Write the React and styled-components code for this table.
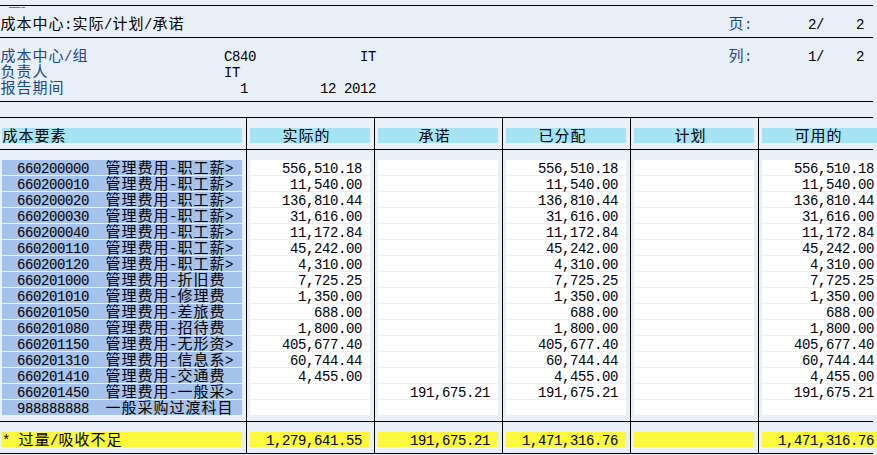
import React from 'react';
import styled, { createGlobalStyle } from 'styled-components';

const GlobalStyle = createGlobalStyle`
  html, body { margin: 0; padding: 0; }
  body {
    background: #e9eff7;
    overflow: hidden;
    font-family: "Liberation Mono", "Noto Sans CJK SC", monospace;
    font-size: 14px;
    letter-spacing: -0.4px;
    color: #000;
  }
`;

const Page = styled.div`
  width: 877px;
  height: 455px;
  padding-top: 5px;
  box-sizing: border-box;
  overflow: hidden;
  background: #e9eff7;
`;

const TitleBand = styled.div`
  width: 873px;
  height: 31px;
  border-top: 1px solid #000;
  border-bottom: 1px solid #000;
`;

const Marker = styled.div`
  width: 16px;
  height: 1px;
  margin: 1px 0 9px 9px;
  background: linear-gradient(90deg, #f0502c 0 11px, #f7a48e 11px 13px, #f0502c 13px);
`;

const HeadRow = styled.div`
  display: grid;
  grid-template-columns: 728px 80px 48px auto;
  height: 16px;
  line-height: 16px;
  white-space: pre;
`;

const InfoBand = styled.div`
  width: 873px;
  height: 52px;
  padding-top: 11px;
  border-bottom: 1px solid #000;
`;

const InfoRow = styled.div`
  display: grid;
  grid-template-columns: 224px 136px 368px 80px 48px auto;
  height: 16px;
  line-height: 16px;
  white-space: pre;
`;

const Label = styled.span`
  color: #17478c;
`;

const Band = styled.div`
  width: 873px;
  display: grid;
  grid-template-columns: 246px repeat(5, 128px);
  border-bottom: 1px solid #000;
  ${p => p.$open && 'border-top: 1px solid #000; margin-top: 15px;'}
`;

const Col = styled.div`
  display: flex;
  flex-direction: column;
  gap: 1px;
  padding: 10px 4px 6px ${p => (p.$first ? 2 : 3)}px;
  border-left: ${p => (p.$first ? 'none' : '1px solid #000')};
`;

const tones = {
  blue: '#a4c2ea',
  white: '#ffffff',
  cyan: '#a6e4f3',
  yellow: '#fcf83e',
};

const Cell = styled.div`
  height: 15px;
  box-sizing: border-box;
  padding: 2px ${p => (p.$align && p.$align !== 'left' ? 8 : 0)}px 0 ${p => p.$indent || 0}px;
  line-height: 15px;
  white-space: pre;
  background: ${p => tones[p.$tone]};
  text-align: ${p => p.$align || 'left'};
`;

const Han = styled.span`
  display: inline-block;
  width: 16px;
  text-align: center;
  font-family: "Noto Sans CJK SC", sans-serif;
  font-size: 15px;
  line-height: 1px;
  letter-spacing: 0;
`;

const wide = /[\u2E80-\u9FFF\uFF00-\uFFEF]/;

// SAP list output: half-width chars 8px, CJK chars 16px
function Txt({ s }) {
  const parts = [];
  let run = '';
  [...s].forEach((c, i) => {
    if (wide.test(c)) {
      if (run) parts.push(run);
      run = '';
      parts.push(<Han key={i}>{c}</Han>);
    } else {
      run += c;
    }
  });
  if (run) parts.push(run);
  return <>{parts}</>;
}

const heads = ['实际的', '承诺', '已分配', '计划', '可用的'];

const rows = [
  ['660200000', '管理费用-职工薪>', '556,510.18', '', '556,510.18', '', '556,510.18'],
  ['660200010', '管理费用-职工薪>', '11,540.00', '', '11,540.00', '', '11,540.00'],
  ['660200020', '管理费用-职工薪>', '136,810.44', '', '136,810.44', '', '136,810.44'],
  ['660200030', '管理费用-职工薪>', '31,616.00', '', '31,616.00', '', '31,616.00'],
  ['660200040', '管理费用-职工薪>', '11,172.84', '', '11,172.84', '', '11,172.84'],
  ['660200110', '管理费用-职工薪>', '45,242.00', '', '45,242.00', '', '45,242.00'],
  ['660200120', '管理费用-职工薪>', '4,310.00', '', '4,310.00', '', '4,310.00'],
  ['660201000', '管理费用-折旧费', '7,725.25', '', '7,725.25', '', '7,725.25'],
  ['660201010', '管理费用-修理费', '1,350.00', '', '1,350.00', '', '1,350.00'],
  ['660201050', '管理费用-差旅费', '688.00', '', '688.00', '', '688.00'],
  ['660201080', '管理费用-招待费', '1,800.00', '', '1,800.00', '', '1,800.00'],
  ['660201150', '管理费用-无形资>', '405,677.40', '', '405,677.40', '', '405,677.40'],
  ['660201310', '管理费用-信息系>', '60,744.44', '', '60,744.44', '', '60,744.44'],
  ['660201410', '管理费用-交通费', '4,455.00', '', '4,455.00', '', '4,455.00'],
  ['660201450', '管理费用-一般采>', '', '191,675.21', '191,675.21', '', '191,675.21'],
  ['988888888', '一般采购过渡科目', '', '', '', '', ''],
];

const totals = ['1,279,641.55', '191,675.21', '1,471,316.76', '', '1,471,316.76'];

export default function App() {
  return (
    <Page>
      <GlobalStyle />
      <TitleBand>
        <Marker />
        <HeadRow>
          <span><Txt s="成本中心:实际/计划/承诺" /></span>
          <Label><Txt s="页:" /></Label>
          <span>2/</span>
          <span>2</span>
        </HeadRow>
      </TitleBand>

      <InfoBand>
        <InfoRow>
          <Label><Txt s="成本中心/组" /></Label>
          <span>C840</span>
          <span>IT</span>
          <Label><Txt s="列:" /></Label>
          <span>1/</span>
          <span>2</span>
        </InfoRow>
        <InfoRow>
          <Label><Txt s="负责人" /></Label>
          <span>IT</span>
        </InfoRow>
        <InfoRow>
          <Label><Txt s="报告期间" /></Label>
          <span>{'  1         12 2012'}</span>
        </InfoRow>
      </InfoBand>

      <Band $open>
        <Col $first>
          <Cell $tone="cyan"><Txt s="成本要素" /></Cell>
        </Col>
        {heads.map(h => (
          <Col key={h}>
            <Cell $tone="cyan" $align="center"><Txt s={h} /></Cell>
          </Col>
        ))}
      </Band>

      <Band>
        <Col $first>
          {rows.map(r => (
            <Cell key={r[0]} $tone="blue" $indent={15}>
              <Txt s={`${r[0]}  ${r[1]}`} />
            </Cell>
          ))}
        </Col>
        {heads.map((h, c) => (
          <Col key={h}>
            {rows.map(r => (
              <Cell key={r[0]} $tone="white" $align="right">{r[c + 2]}</Cell>
            ))}
          </Col>
        ))}
      </Band>

      <Band>
        <Col $first>
          <Cell $tone="yellow"><Txt s="* 过量/吸收不足" /></Cell>
        </Col>
        {totals.map((t, c) => (
          <Col key={c}>
            <Cell $tone="yellow" $align="right">{t}</Cell>
          </Col>
        ))}
      </Band>
    </Page>
  );
}
